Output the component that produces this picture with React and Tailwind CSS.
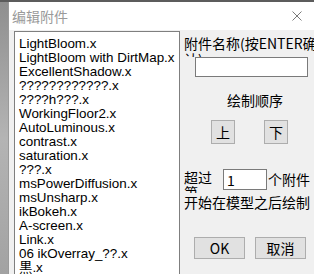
import React from 'react';

const items = [
  'LightBloom.x',
  'LightBloom with DirtMap.x',
  'ExcellentShadow.x',
  '????????????.x',
  '????h???.x',
  'WorkingFloor2.x',
  'AutoLuminous.x',
  'contrast.x',
  'saturation.x',
  '???.x',
  'msPowerDiffusion.x',
  'msUnsharp.x',
  'ikBokeh.x',
  'A-screen.x',
  'Link.x',
  '06 ikOverray_??.x',
  '黒.x',
];

const cjk = { fontFamily: '"Noto Sans CJK SC", "Liberation Sans", sans-serif' };

const WinButton = ({ children, className }) => (
  <button
    className={`flex items-center justify-center bg-[#e1e1e1] border border-[#adadad] text-[14px] text-black leading-none ${className}`}
    style={cjk}
  >
    {children}
  </button>
);

export default function App() {
  return (
    <div className="w-[314px] h-[274px] overflow-hidden flex flex-col bg-[#a8a8a8]">
      <div className="h-[2px] bg-[#5c5c5c] shrink-0" />
      <div className="flex flex-1 min-h-0">
        <div className="w-[8px] shrink-0 bg-gradient-to-b from-[#8f8f8f] via-[#b4b4b4] to-[#a2a2a2]" />
        <div className="flex-1 flex flex-col border-l border-[#9a9a9a] min-w-0">
          {/* title bar */}
          <div className="h-[28px] shrink-0 bg-white flex items-center justify-between pl-[3px] pr-[12px]">
            <span className="text-[14px] text-[#9a9a9a] leading-none" style={cjk}>
              编辑附件
            </span>
            <svg width="10" height="10" viewBox="0 0 10 10">
              <path d="M0.5 0.5 L9.5 9.5 M9.5 0.5 L0.5 9.5" stroke="#7a7a7a" strokeWidth="1" />
            </svg>
          </div>

          {/* body */}
          <div className="flex-1 bg-[#f0f0f0] flex pl-[5px] pt-[1px] min-h-0">
            <div
              className="w-[166px] h-[260px] shrink-0 bg-white border border-[#7f7f7f] pt-[5px] pl-[4px] overflow-hidden"
              style={{ fontFamily: '"Liberation Sans", "Noto Sans CJK JP", sans-serif' }}
            >
              {items.map((it) => (
                <div key={it} className="h-[14px] leading-[14px] text-[13.4px] text-black whitespace-nowrap">
                  {it}
                </div>
              ))}
            </div>

            <div className="flex-1 pl-[4px] text-black min-w-0" style={cjk}>
              <div className="mt-[4px] h-[22px] w-[136px] text-[14px] leading-[16px] overflow-hidden">
                附件名称(按ENTER确认)
              </div>
              <div className="ml-[11px] w-[113px] h-[20px] bg-white border border-[#7a7a7a]" />

              <div className="mt-[15px] ml-[43px] text-[14px] leading-[16px] whitespace-nowrap">绘制顺序</div>

              <div className="mt-[12px] ml-[27px] flex gap-[29px]">
                <WinButton className="w-[24px] h-[24px]">上</WinButton>
                <WinButton className="w-[24px] h-[24px]">下</WinButton>
              </div>

              <div className="mt-[25px] flex items-start h-[21px] text-[14px]">
                <div className="w-[29px] h-[24px] leading-[15px] pt-[1px] overflow-hidden">超过第</div>
                <div className="ml-[10px] w-[44px] h-[21px] bg-white border border-[#7a7a7a] flex items-center pl-[3px] text-[14px] leading-none">
                  1
                </div>
                <div className="ml-[1px] leading-[21px] whitespace-nowrap">个附件</div>
              </div>

              <div className="relative mt-[4px] bg-[#f0f0f0] text-[14px] leading-[16px] whitespace-nowrap">
                开始在模型之后绘制
              </div>

              <div className="mt-[27px] ml-[10px] flex gap-[10px]">
                <WinButton className="w-[51px] h-[22px]">OK</WinButton>
                <WinButton className="w-[51px] h-[22px]">取消</WinButton>
              </div>
            </div>
          </div>
        </div>
      </div>
    </div>
  );
}
